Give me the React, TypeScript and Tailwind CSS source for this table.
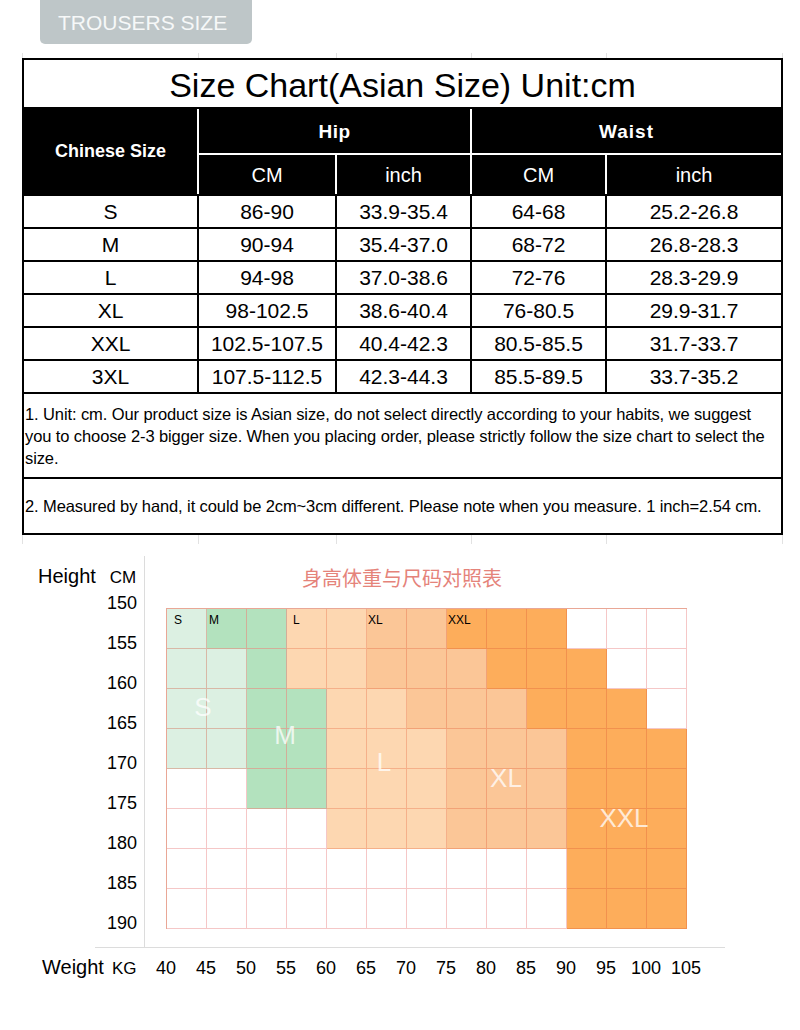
import React from 'react';

const sizeRows = [
    ['S', '86-90', '33.9-35.4', '64-68', '25.2-26.8'],
    ['M', '90-94', '35.4-37.0', '68-72', '26.8-28.3'],
    ['L', '94-98', '37.0-38.6', '72-76', '28.3-29.9'],
    ['XL', '98-102.5', '38.6-40.4', '76-80.5', '29.9-31.7'],
    ['XXL', '102.5-107.5', '40.4-42.3', '80.5-85.5', '31.7-33.7'],
    ['3XL', '107.5-112.5', '42.3-44.3', '85.5-89.5', '33.7-35.2'],
];

// S = light green, M = green, L = peach, X = XL orange, Z = XXL orange, W = empty
const chartMap = [
    'SMMLLXXZZZWWW',
    'SSMLLXXXZZZWW',
    'SSMMLLXXXZZZW',
    'SSMMLLLXXXZZZ',
    'WWMMLLLXXXZZZ',
    'WWWWLLLXXXZZZ',
    'WWWWWWWWWWZZZ',
    'WWWWWWWWWWZZZ',
];

const cellStyle: Record<string, string> = {
    S: 'bg-[#dcf0e2] border-[#d8b8a6]',
    M: 'bg-[#b3e2be] border-[#d2ae99]',
    L: 'bg-[#fdd7b1] border-[#f5b08a]',
    X: 'bg-[#fbc697] border-[#f2a277]',
    Z: 'bg-[#fdad5b] border-[#f2914e]',
    W: 'bg-white border-[#f5c7c7]',
};

const cornerLabels: Record<number, [string, string]> = {
    0: ['S', 'pl-[7px]'],
    1: ['M', 'pl-[2px]'],
    3: ['L', 'pl-[6px]'],
    5: ['XL', 'pl-[1px]'],
    7: ['XXL', 'pl-[1px]'],
};

const heights = [150, 155, 160, 165, 170, 175, 180, 185, 190];
const weights = [40, 45, 50, 55, 60, 65, 70, 75, 80, 85, 90, 95, 100, 105];

const GridTicks: React.FC<{ tall: string }> = ({ tall }) => (
    <div className={`ml-[22px] flex ${tall}`}>
        <div className="w-[176px] border-l border-[#e2e2e2]" />
        <div className="w-[138px] border-l border-[#e2e2e2]" />
        <div className="w-[135px] border-l border-[#e2e2e2]" />
        <div className="w-[135px] border-l border-[#e2e2e2]" />
        <div className="w-[177px] border-l border-r border-[#e2e2e2]" />
    </div>
);

const App: React.FC = () => {
    const headCell = 'bg-black text-white flex items-center justify-center';

    return (
        <div className="w-[800px] h-[1030px] bg-white overflow-hidden text-black font-['Liberation_Sans','Noto_Sans_CJK_SC',Arial,sans-serif]">
            {/* tab */}
            <div className="ml-[40px] w-[212px] h-[44px] bg-[#bec6c8] rounded-b-[5px] flex items-center pl-[18px]">
                <span className="text-[21px] leading-none text-[#f6f8f8] pt-[1px]">TROUSERS SIZE</span>
            </div>

            <div className="mt-[9px]">
                <GridTicks tall="h-[5px]" />
            </div>

            {/* size table */}
            <div className="ml-[22px] w-[761px] border-2 border-black bg-black flex flex-col gap-[2px]">
                <div className="h-[47px] bg-white flex items-center justify-center pt-[3px] text-[34px] leading-none">
                    Size Chart(Asian Size) Unit:cm
                </div>

                <div className="grid grid-cols-[173px_136px_133px_133px_174px] grid-rows-[44px_39px] gap-[2px] bg-white">
                    <div className={`${headCell} row-span-2 font-bold text-[18px]`}>Chinese Size</div>
                    <div className={`${headCell} col-span-2 pt-[3px] font-bold text-[19px] tracking-[0.5px]`}>Hip</div>
                    <div className={`${headCell} col-span-2 pt-[3px] font-bold text-[19px] tracking-[1px]`}>Waist</div>
                    <div className={`${headCell} text-[20px]`}>CM</div>
                    <div className={`${headCell} text-[20px]`}>inch</div>
                    <div className={`${headCell} text-[20px]`}>CM</div>
                    <div className={`${headCell} text-[20px]`}>inch</div>
                </div>

                <div className="grid grid-cols-[173px_136px_133px_133px_174px] auto-rows-[31px] gap-[2px] bg-black">
                    {sizeRows.map((row) =>
                        row.map((value, i) => (
                            <div key={row[0] + i} className="bg-white flex items-center justify-center text-[21px] leading-none">
                                {value}
                            </div>
                        ))
                    )}
                </div>

                <div className="h-[83px] bg-white flex items-center pl-[1px] pr-[2px]">
                    <p className="text-[16.5px] leading-[22px] tracking-[-0.1px]">
                        1. Unit: cm. Our product size is Asian size, do not select directly according to your habits, we suggest you to choose 2-3 bigger size. When you placing order, please strictly follow the size chart to select the size.
                    </p>
                </div>
                <div className="h-[54px] bg-white flex items-center pl-[1px]">
                    <p className="text-[16.5px] leading-[22px] tracking-[-0.1px]">
                        2. Measured by hand, it could be 2cm~3cm different. Please note when you measure. 1 inch=2.54 cm.
                    </p>
                </div>
            </div>

            <GridTicks tall="h-[9px]" />

            {/* height / weight chart */}
            <div className="mt-[12px] flex">
                <div className="w-[144px] flex flex-col">
                    <div className="h-[37px] pt-[10px] flex items-baseline leading-[20px]">
                        <span className="pl-[38px] text-[20px]">Height</span>
                        <span className="ml-[14px] text-[17px]">CM</span>
                    </div>
                    <div className="flex flex-col items-end gap-[20px] pr-[7px]">
                        {heights.map((h) => (
                            <span key={h} className="h-[20px] leading-[20px] text-[18px]">{h}</span>
                        ))}
                    </div>
                </div>

                <div className="w-[581px] h-[391px] border-l border-[#dcdcdc] pl-[21px] pt-[10px]">
                    <div className="h-[24px] pl-[136px] text-[20px] leading-[24px] text-[#e5837a] font-['Noto_Sans_CJK_SC',sans-serif]">
                        身高体重与尺码对照表
                    </div>
                    <div className="relative mt-[18px] w-fit grid grid-cols-[repeat(13,40px)] border-l border-t border-[#e9a796]">
                        {chartMap.map((row, r) =>
                            row.split('').map((c, col) => {
                                const label = r === 0 ? cornerLabels[col] : undefined;
                                return (
                                    <div key={`${r}-${col}`} className={`w-[40px] h-[40px] border-r border-b ${cellStyle[c]}`}>
                                        {label && (
                                            <span className={`block pt-[4px] text-[12px] leading-[14px] ${label[1]}`}>{label[0]}</span>
                                        )}
                                    </div>
                                );
                            })
                        )}
                        <span className="absolute left-[36px] top-[98px] -translate-x-1/2 -translate-y-1/2 text-[26px] leading-none text-white/75">S</span>
                        <span className="absolute left-[118px] top-[126px] -translate-x-1/2 -translate-y-1/2 text-[26px] leading-none text-white/75">M</span>
                        <span className="absolute left-[217px] top-[153px] -translate-x-1/2 -translate-y-1/2 text-[26px] leading-none text-white/75">L</span>
                        <span className="absolute left-[339px] top-[169px] -translate-x-1/2 -translate-y-1/2 text-[26px] leading-none text-white/75">XL</span>
                        <span className="absolute left-[457px] top-[209px] -translate-x-1/2 -translate-y-1/2 text-[26px] leading-none text-white/75">XXL</span>
                    </div>
                </div>
            </div>
            <div className="ml-[95px] w-[630px] h-px bg-[#dcdcdc]" />

            <div className="mt-[7px] flex items-baseline leading-[24px]">
                <div className="w-[146px] flex items-baseline">
                    <span className="pl-[42px] text-[20px]">Weight</span>
                    <span className="ml-[8px] text-[17px]">KG</span>
                </div>
                {weights.map((w) => (
                    <span key={w} className="w-[40px] text-center text-[18px]">{w}</span>
                ))}
            </div>
        </div>
    );
};

export default App;
